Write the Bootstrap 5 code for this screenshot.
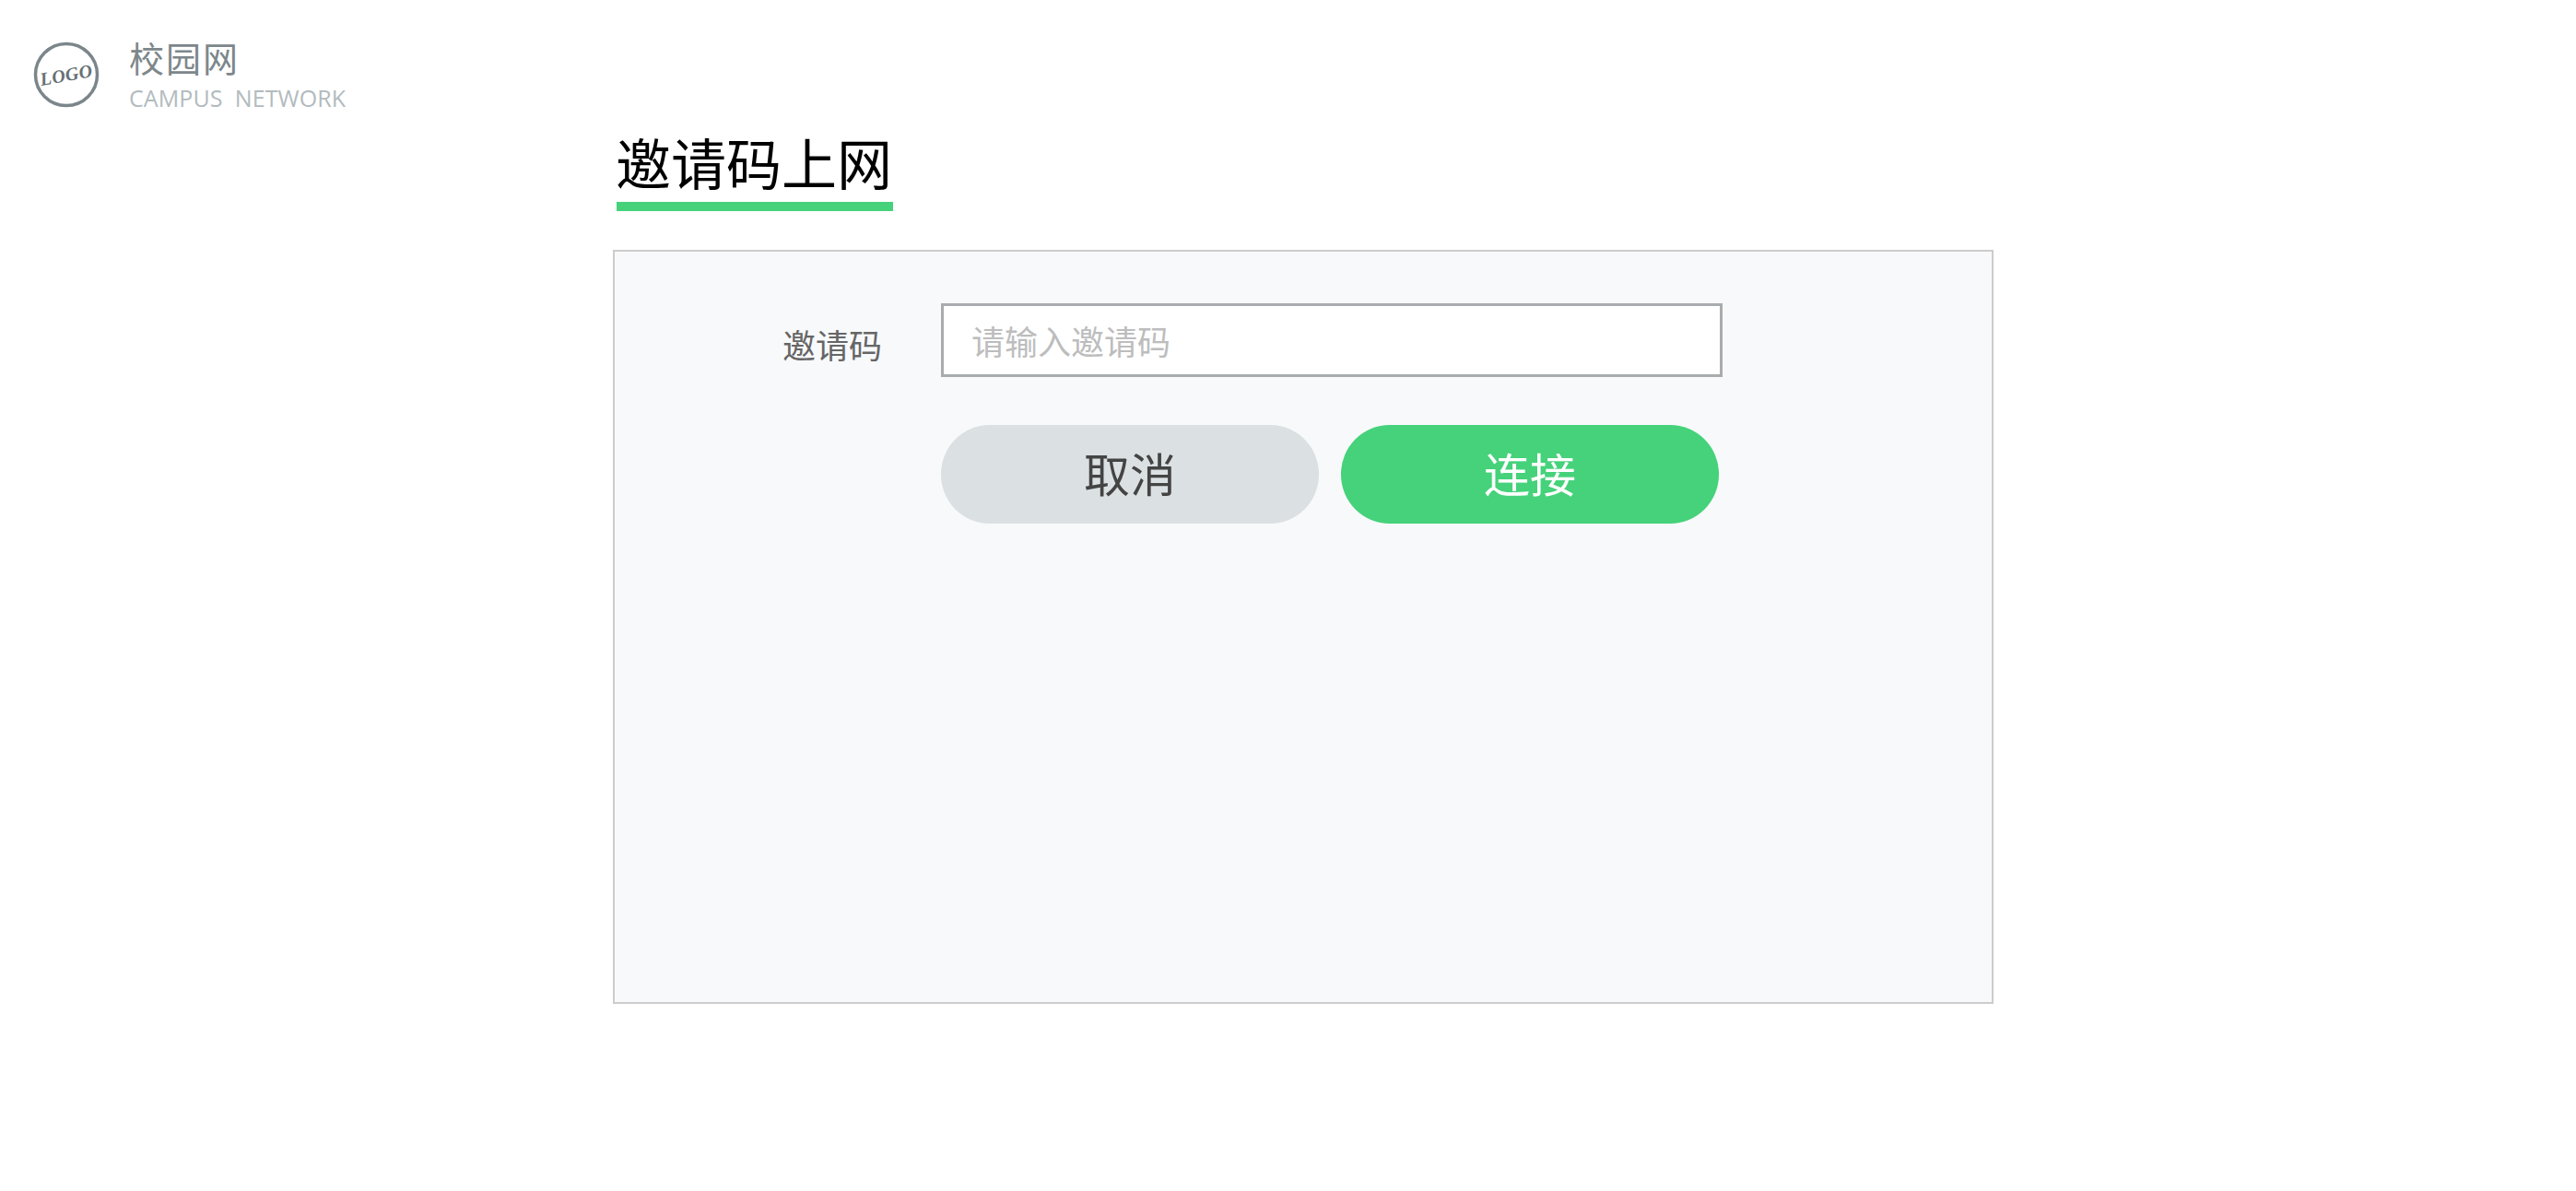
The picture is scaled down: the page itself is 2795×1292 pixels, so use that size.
<!DOCTYPE html>
<html lang="zh-CN">
<head>
<meta charset="utf-8">
<title>邀请码上网</title>
<link href="https://cdn.jsdelivr.net/npm/bootstrap@5.3.0/dist/css/bootstrap.min.css" rel="stylesheet">
<style>
html,body{height:100%;}
body{background:#fff;font-family:"Noto Sans CJK SC","Liberation Sans",sans-serif;overflow:hidden;}
.brand-bar{padding:45px 0 0 36px;height:124px;gap:32px;}
.brand-logo{width:72px;height:72px;display:block;}
.brand-cn{font-size:38px;line-height:38px;color:#7d878b;letter-spacing:2px;margin-top:-2px;}
.brand-en{font-family:"Open Sans","Liberation Sans",sans-serif;font-size:25px;line-height:30px;color:#b2bbbe;margin-top:10px;white-space:pre;letter-spacing:.1px;}
.page-area{margin-left:665px;width:1498px;}
.page-title{display:inline-block;margin:0 0 42px 4px;padding:6px 1px 0 0;font-size:60px;line-height:89px;font-weight:400;color:#000;border-bottom:10px solid #45d27a;text-indent:-1px;}
.invite-panel{height:818px;background:#f8f9fb;border:2px solid #ccc;padding:56px 0 0 0;}
.invite-row{height:80px;}
.invite-label{width:290px;margin-right:64px;text-align:right;font-size:36px;line-height:80px;color:#666;flex:none;padding-top:4px;}
.invite-input.form-control{width:848px;height:80px;flex:none;border:3px solid #a9acae;border-radius:0;background:#fff;padding:0 30px;font-size:36px;color:#333;box-shadow:none;}
.invite-input.form-control::placeholder{color:#bdbdbd;}
.action-row{margin-top:52px;gap:24px;padding-left:354px;}
.action-btn.btn{width:410px;height:107px;border:0;border-radius:53px;font-size:50px;line-height:1;padding:0 0 6px;}
.action-cancel.btn{background:#dbe0e2;color:#444;}
.action-connect.btn{background:#45d27a;color:#fff;}
</style>
</head>
<body>
<header class="brand-bar d-flex align-items-start">
  <svg class="brand-logo" viewBox="0 0 72 72" role="img" aria-label="LOGO">
    <circle cx="36" cy="36" r="33.5" fill="none" stroke="#7b868b" stroke-width="3.5"/>
    <text x="36" y="43" text-anchor="middle" font-family="'Liberation Serif',serif" font-style="italic" font-weight="700" font-size="20" fill="#667176" letter-spacing=".5" transform="rotate(-10 36 36)">LOGO</text>
  </svg>
  <div>
    <div class="brand-cn">校园网</div>
    <div class="brand-en">CAMPUS  NETWORK</div>
  </div>
</header>
<main class="page-area">
  <h1 class="page-title">邀请码上网</h1>
  <form class="invite-panel">
    <div class="invite-row d-flex align-items-start">
      <label class="invite-label" for="invite-code">邀请码</label>
      <input id="invite-code" class="invite-input form-control" type="text" placeholder="请输入邀请码">
    </div>
    <div class="action-row d-flex">
      <button type="button" class="action-btn action-cancel btn">取消</button>
      <button type="button" class="action-btn action-connect btn">连接</button>
    </div>
  </form>
</main>
<script src="https://cdn.jsdelivr.net/npm/bootstrap@5.3.0/dist/js/bootstrap.bundle.min.js"></script>
</body>
</html>
